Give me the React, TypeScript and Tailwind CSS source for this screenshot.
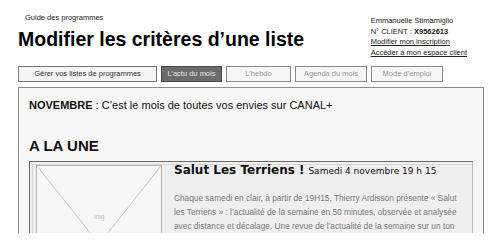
import React from 'react';

const tabs = [
  { label: 'Gérer vos listes de programmes', w: 'w-[139px]', kind: 'normal' },
  { label: 'L\u2019actu du mois', w: 'w-[61px]', kind: 'active' },
  { label: 'L\u2019hebdo', w: 'w-[65px]', kind: 'muted' },
  { label: 'Agenda du mois', w: 'w-[72px]', kind: 'muted' },
  { label: 'Mode d\u2019emploi', w: 'w-[72px]', kind: 'muted' },
];

function Tab({ label, w, kind }: { label: string; w: string; kind: string }) {
  const cls =
    kind === 'active'
      ? 'bg-[#6a6a6a] border-[#4a4a4a] text-[#e8e8e8]'
      : kind === 'muted'
      ? 'bg-[#f6f6f6] border-[#8a8a8a] text-[#9a9a9a]'
      : 'bg-[#f4f4f4] border-[#777] text-[#333]';
  return (
    <div className={`${w} h-[16px] border flex items-center justify-center text-[7.5px] leading-none ${cls}`}>
      {label}
    </div>
  );
}

function ImgPlaceholder() {
  return (
    <div className="relative w-[126px] h-[80px] shrink-0 border border-[#b5b5b5] bg-[#f7f7f7]">
      <svg className="absolute inset-0" width="124" height="78" viewBox="0 0 124 78">
        <line x1="0" y1="0" x2="62" y2="78" stroke="#c4c4c4" strokeWidth="1" />
        <line x1="124" y1="0" x2="62" y2="78" stroke="#c4c4c4" strokeWidth="1" />
      </svg>
      <span className="absolute left-[57px] top-[46px] text-[6.5px] text-[#bbb]">img</span>
    </div>
  );
}

export default function App() {
  return (
    <div className="w-[499px] h-[249px] bg-white overflow-hidden font-['Liberation_Sans',Arial,sans-serif]">
      <div className="h-[233px] overflow-hidden">
        <header className="flex justify-between pl-[18px] pr-[32px] pt-[13px]">
          <div>
            <div className="pl-[7px] text-[7.5px] leading-[9px] text-[#222]">Guide des programmes</div>
            <h1 className="mt-[5px] text-[19.5px] leading-[24px] font-bold text-black">
              Modifier les critères d’une liste
            </h1>
          </div>
          <div className="pt-[3px] text-[7.5px] leading-[10.7px] text-[#222]">
            <div>Emmanuelle Stimamiglio</div>
            <div>
              N° CLIENT : <span className="font-bold">X9562613</span>
            </div>
            <div className="underline">Modifier mon inscription</div>
            <div className="underline">Accéder à mon espace client</div>
          </div>
        </header>

        <nav className="flex gap-[4px] pl-[18px] mt-[7px]">
          {tabs.map((t) => (
            <Tab key={t.label} {...t} />
          ))}
        </nav>

        <main className="ml-[18px] mr-[15px] mt-[5px] h-[200px] border border-[#8a8a8a] bg-[#f7f7f7] pl-[10px] pr-[10px]">
          <p className="pt-[10px] text-[11px] leading-[14px] text-[#111]">
            <span className="font-bold">NOVEMBRE</span> : C’est le mois de toutes vos envies sur CANAL+
          </p>
          <h2 className="mt-[25px] text-[15px] leading-[18px] font-bold text-[#111]">A LA UNE</h2>
          <section className="mt-[6px] border border-[#6a6a6a] border-r-[#bbb] bg-[#efefef] pl-[2px] pt-[2px]">
            <div className="border-l border-t border-[#d8d8d8] pl-[3px] flex items-start gap-[12px]">
              <ImgPlaceholder />
              <div className="pr-[7px] relative -top-[2px]">
                <h3 className="font-['DejaVu_Sans',Verdana,sans-serif] text-[12px] leading-[14px] text-[#111]">
                  <span className="font-bold">Salut Les Terriens !</span>{' '}
                  <span className="text-[9px]">Samedi 4 novembre 19 h 15</span>
                </h3>
                <p className="mt-[13px] text-[8.3px] leading-[14px] text-[#7a7a7a]">
                  Chaque samedi en clair, à partir de 19H15, Thierry Ardisson présente « Salut les Terriens » :
                  l’actualité de la semaine en 50 minutes, observée et analysée avec distance et décalage. Une
                  revue de l’actualité de la semaine sur un ton décalé et impertinent.
                </p>
              </div>
            </div>
          </section>
        </main>
      </div>
    </div>
  );
}
